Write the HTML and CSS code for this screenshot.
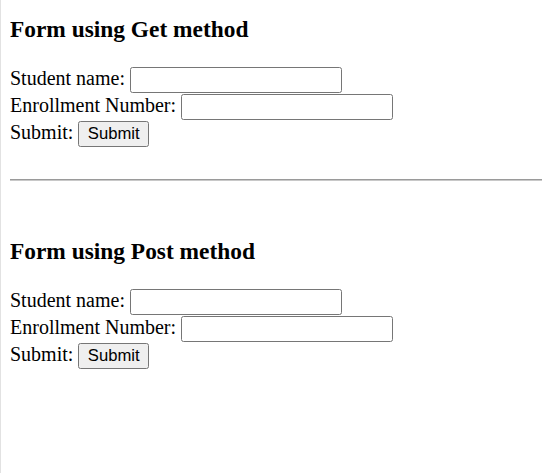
FILE: index.html
```html
<!DOCTYPE html>
<html>
<head>
<meta charset="utf-8">
<link rel="stylesheet" href="styles.css">
</head>
<body>
<h3 class="title title-first">Form using Get method</h3>
<form class="entry-form" action="#" method="get">
Student name: <input class="field" type="text" name="name"><br>
Enrollment Number: <input class="field" type="text" name="enroll"><br>
Submit: <input class="btn" type="submit" value="Submit">
</form>
<hr class="divider">
<br>
<h3 class="title">Form using Post method</h3>
<form class="entry-form" action="#" method="post">
Student name: <input class="field" type="text" name="name"><br>
Enrollment Number: <input class="field" type="text" name="enroll"><br>
Submit: <input class="btn" type="submit" value="Submit">
</form>
</body>
</html>
```

FILE: styles.css
```css
html {
  margin: 0;
  padding: 0;
  border-left: 1px solid #e2e2e2;
  height: 100%;
  box-sizing: border-box;
  background: #fff;
  overflow: hidden;
}
body {
  zoom: 1.25;
  margin: 0 0 0 7.2px;
  padding-top: 0.1px;
  font-family: "Liberation Serif", "Times New Roman", serif;
  font-size: 16px;
  color: #000;
  width: 440px;
}
.title {
  font-size: 1.17em;
  font-weight: bold;
  margin: 1em 0;
}
.title-first {
  margin-top: 13px;
}
.entry-form {
  margin: 0 0 25.8px 0;
}
.field {
  font-family: "Liberation Sans", Arial, sans-serif;
  font-size: 13.33px;
  width: 169.6px;
  height: 21px;
  box-sizing: border-box;
  border: 1px solid #767676;
  border-radius: 2px;
  padding: 1px 2px;
  margin: 0 0 0.6px 0;
  background: #fff;
}
.btn {
  font-family: "Liberation Sans", Arial, sans-serif;
  font-size: 13.33px;
  background: #efefef;
  border: 1px solid #767676;
  border-radius: 2px;
  padding: 1px 6px;
  width: 56.6px;
  height: 21px;
  margin: 0;
  color: #000;
}
.divider {
  margin: 8px 0 8.4px 0;
  width: 440px;
  border: 0;
  border-top: 1px solid #9a9a9a;
  border-bottom: 1px solid #c8c8c8;
  height: 0;
}
```
